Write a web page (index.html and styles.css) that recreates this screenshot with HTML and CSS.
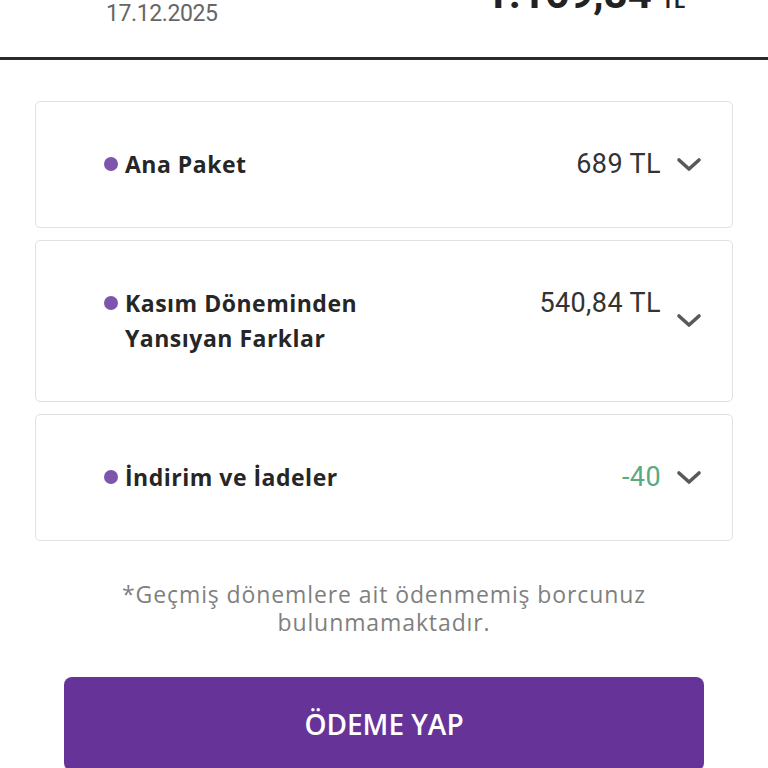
FILE: index.html
```html
<!DOCTYPE html>
<html lang="tr">
<head>
<meta charset="utf-8">
<title>Fatura</title>
<link rel="stylesheet" href="styles.css">
</head>
<body>
<header class="summary">
  <div class="date">17.12.2025</div>
  <div class="total">1.169,84<span class="cur">TL</span></div>
</header>
<main class="items">
  <section class="card">
    <div class="row">
      <div class="label-group"><span class="dot"></span><span class="label">Ana Paket</span></div>
      <div class="amount">689 TL</div>
      <svg class="chev" viewBox="0 0 26 16" width="26" height="16"><path d="M3 3 L13 12 L23 3" fill="none" stroke="#595959" stroke-width="3.6" stroke-linecap="round" stroke-linejoin="round"/></svg>
    </div>
  </section>
  <section class="card">
    <div class="row">
      <div class="label-group"><span class="dot"></span><span class="label">Kasım Döneminden Yansıyan Farklar</span></div>
      <div class="amount">540,84 TL</div>
      <svg class="chev" viewBox="0 0 26 16" width="26" height="16"><path d="M3 3 L13 12 L23 3" fill="none" stroke="#595959" stroke-width="3.6" stroke-linecap="round" stroke-linejoin="round"/></svg>
    </div>
  </section>
  <section class="card">
    <div class="row">
      <div class="label-group"><span class="dot"></span><span class="label">İndirim ve İadeler</span></div>
      <div class="amount amount-green">-40</div>
      <svg class="chev" viewBox="0 0 26 16" width="26" height="16"><path d="M3 3 L13 12 L23 3" fill="none" stroke="#595959" stroke-width="3.6" stroke-linecap="round" stroke-linejoin="round"/></svg>
    </div>
  </section>
</main>
<p class="note">*Geçmiş dönemlere ait ödenmemiş borcunuz<br>bulunmamaktadır.</p>
<button class="pay">ÖDEME YAP</button>
</body>
</html>
```
FILE: styles.css
```css
html, body {
  margin: 0;
  padding: 0;
  background: #ffffff;
  overflow: hidden;
}
body {
  font-family: "Open Sans", "Noto Sans", sans-serif;
  color: #262626;
}
.summary {
  display: flex;
  justify-content: space-between;
  align-items: flex-start;
  height: 57px;
  padding: 0 83px 0 106px;
  border-bottom: 3px solid #2b2b2b;
}
.date {
  font-family: Roboto, "Liberation Sans", sans-serif;
  font-size: 23px;
  line-height: 28px;
  color: #666666;
  letter-spacing: -0.4px;
}
.total {
  font-family: Roboto, "Liberation Sans", sans-serif;
  font-weight: 700;
  font-size: 42px;
  line-height: 50px;
  margin-top: -31px;
  color: #222222;
}
.cur {
  font-size: 20px;
  margin-left: 10px;
}
.items {
  display: flex;
  flex-direction: column;
  gap: 12px;
  margin: 41px 35px 0 35px;
}
.card {
  border: 1.5px solid #e2e2e2;
  border-radius: 5px;
  padding: 45px 30px 45px 68px;
}
.row {
  display: flex;
  align-items: center;
}
.label-group {
  display: flex;
  align-items: flex-start;
  flex: 0 0 300px;
}
.dot {
  flex: none;
  width: 14px;
  height: 14px;
  border-radius: 50%;
  background: #7d55ad;
  margin-top: 10px;
  margin-right: 7px;
}
.label {
  font-weight: 700;
  font-size: 23px;
  line-height: 35px;
  letter-spacing: 0.5px;
  color: #262626;
}
.amount {
  margin-left: auto;
  align-self: flex-start;
  font-family: Roboto, "Liberation Sans", sans-serif;
  font-size: 27px;
  line-height: 35px;
  letter-spacing: 0.4px;
  color: #333333;
}
.amount-green {
  color: #5aaa82;
}
.chev {
  flex: none;
  margin-left: 15px;
  display: block;
}
.note {
  margin: 39px 0 0 0;
  text-align: center;
  font-size: 23px;
  line-height: 28px;
  letter-spacing: 0.9px;
  color: #7f7f7f;
}
.pay {
  display: block;
  width: calc(100% - 128px);
  margin: 41px 64px 0 64px;
  height: 94px;
  border: none;
  border-radius: 8px;
  background: #663399;
  color: #ffffff;
  font-family: "Open Sans", "Noto Sans", sans-serif;
  font-weight: 600;
  font-size: 28px;
  padding: 0;
}
```
